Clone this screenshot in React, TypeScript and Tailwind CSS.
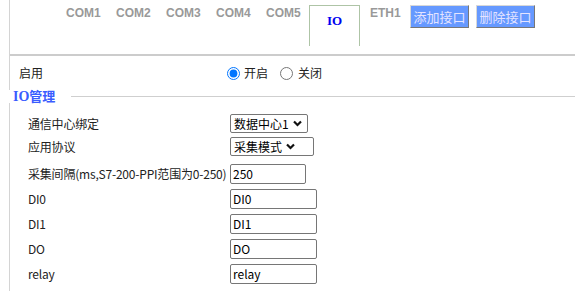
import React from 'react';

const cjk = { fontFamily: '"Noto Sans CJK SC", "Open Sans", sans-serif' };

const Chevron: React.FC = () => (
  <svg width="9" height="7" viewBox="0 0 9 7" className="ml-[4px]">
    <path d="M1 1.5 L4.5 5 L8 1.5" fill="none" stroke="#111" strokeWidth="2.2" />
  </svg>
);

const FakeSelect: React.FC<{ value: string; width: string }> = ({ value, width }) => (
  <div className={`${width} h-[19px] flex items-center border border-[#767676] rounded-[2px] pl-[3px] text-[12px] text-black leading-none`}>
    <span>{value}</span>
    <Chevron />
  </div>
);

const TextBox: React.FC<{ value: string; width?: string }> = ({ value, width = 'w-[87px]' }) => (
  <div className={`${width} h-[20px] flex items-center border border-[#767676] rounded-[2px] pl-[2px] text-[12px] text-black leading-none`}>
    {value}
  </div>
);

const Row: React.FC<{ label: string; h: string; children: React.ReactNode }> = ({ label, h, children }) => (
  <div className={`flex items-center ${h}`}>
    <div className="w-[202px] whitespace-nowrap tracking-[-0.2px] text-[12px] text-[#222] leading-none">{label}</div>
    {children}
  </div>
);

const App: React.FC = () => {
  const tabs = ['COM1', 'COM2', 'COM3', 'COM4'];

  return (
    <div className="w-[575px] h-[291px] bg-white overflow-hidden" style={cjk}>
      {/* tab bar */}
      <div className="ml-[9px] border-l border-[#d4d4d4]">
        <div className="h-[56px] border-b-2 border-[#cccccc] flex items-start pl-[56px]">
          {tabs.map((t) => (
            <div
              key={t}
              className="w-[50px] pt-[6px] text-[12px] leading-[14px] font-bold text-[#999]"
              style={{ fontFamily: '"Liberation Sans", Arial, sans-serif' }}
            >
              {t}
            </div>
          ))}
          <div
            className="w-[43px] pt-[6px] text-[12px] leading-[14px] font-bold text-[#999]"
            style={{ fontFamily: '"Liberation Sans", Arial, sans-serif' }}
          >
            COM5
          </div>
          <div className="mt-[5px] w-[51px] h-[41px] border border-b-0 border-[#aec4a6] flex justify-center pt-[8px]">
            <span
              className="text-[13px] leading-[14px] font-bold text-[#0000f0]"
              style={{ fontFamily: '"Liberation Serif", "Times New Roman", serif' }}
            >
              IO
            </span>
          </div>
          <div
            className="ml-[10px] w-[40px] pt-[6px] text-[12px] leading-[14px] font-bold text-[#999]"
            style={{ fontFamily: '"Liberation Sans", Arial, sans-serif' }}
          >
            ETH1
          </div>
          <button className="mt-[5px] w-[59px] h-[23px] bg-[#6699ff] text-[#e4e4ff] text-[13px] leading-none border border-t-[#d8d8d8] border-l-[#d8d8d8] border-b-[#777] border-r-[#777]">
            添加接口
          </button>
          <button className="mt-[5px] ml-[7px] w-[59px] h-[23px] bg-[#6699ff] text-[#e4e4ff] text-[13px] leading-none border border-t-[#d8d8d8] border-l-[#d8d8d8] border-b-[#777] border-r-[#777]">
            删除接口
          </button>
        </div>

        {/* enable row */}
        <div className="h-[34px] flex items-center pl-[9px] text-[12px] text-[#222]">
          <div className="w-[208px] leading-none">启用</div>
          <input type="radio" name="en" defaultChecked className="m-0 w-[13px] h-[13px]" />
          <span className="ml-[4px] mr-[12px] leading-none">开启</span>
          <input type="radio" name="en" className="m-0 w-[13px] h-[13px]" />
          <span className="ml-[5px] leading-none">关闭</span>
        </div>
      </div>

      {/* section title */}
      <div className="h-[13px] flex items-center pl-[13px]">
        <span className="text-[13px] leading-none font-bold text-[#3a5cff]">
          <span style={{ fontFamily: '"Liberation Serif", serif' }} className="text-[14px]">IO</span>
          管理
        </span>
        <div className="ml-[16px] flex-1 border-t border-[#cfcfcf]" />
      </div>

      {/* fields */}
      <div className="ml-[9px] border-l border-[#d4d4d4] pl-[18px] pt-[9px] h-[188px]">
        <Row label="通信中心绑定" h="h-[23px]">
          <FakeSelect value="数据中心1" width="w-[78px]" />
        </Row>
        <Row label="应用协议" h="h-[23px]">
          <FakeSelect value="采集模式" width="w-[84px]" />
        </Row>
        <div className="mt-[3px]">
          <Row label="采集间隔(ms,S7-200-PPI范围为0-250)" h="h-[25px]">
            <TextBox value="250" width="w-[76px]" />
          </Row>
          <Row label="DI0" h="h-[25px]">
            <TextBox value="DI0" />
          </Row>
          <Row label="DI1" h="h-[25px]">
            <TextBox value="DI1" />
          </Row>
          <Row label="DO" h="h-[25px]">
            <TextBox value="DO" />
          </Row>
          <Row label="relay" h="h-[25px]">
            <TextBox value="relay" />
          </Row>
        </div>
      </div>
    </div>
  );
};

export default App;
